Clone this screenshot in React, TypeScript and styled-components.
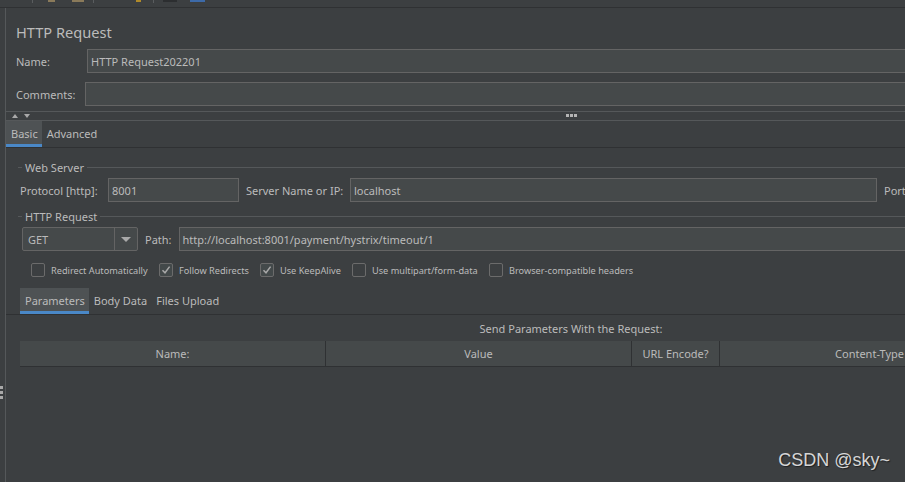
import styled, { createGlobalStyle } from "styled-components";

const GlobalStyle = createGlobalStyle`
  html, body {
    margin: 0;
    padding: 0;
    background: #3c3f41;
    overflow: hidden;
  }
  * {
    box-sizing: border-box;
  }
`;

const Frame = styled.div`
  width: 905px;
  height: 482px;
  display: flex;
  flex-direction: column;
  background: #3c3f41;
  color: #bbbbbb;
  font-family: "Noto Sans", "Open Sans", sans-serif;
  font-size: 11px;
  position: relative;
  overflow: hidden;
`;

const Toolbar = styled.div`
  height: 8px;
  flex: none;
  display: flex;
  align-items: flex-start;
  border-bottom: 1px solid #2f3133;
  padding-left: 32px;
`;

const ToolSep = styled.div<{ $gap: number }>`
  width: 1px;
  height: 3px;
  background: #5a5d5f;
  margin-right: ${({ $gap }) => $gap}px;
`;

const ToolIcon = styled.div<{ $color: string; $w: number; $gap: number }>`
  width: ${({ $w }) => $w}px;
  height: 2px;
  background: ${({ $color }) => $color};
  margin-right: ${({ $gap }) => $gap}px;
`;

const Body = styled.div`
  flex: 1;
  display: flex;
  min-height: 0;
`;

const Gutter = styled.div`
  width: 6px;
  flex: none;
  border-right: 1px solid #55585a;
  display: flex;
  flex-direction: column;
  padding-top: 378px;
  gap: 2px;
`;

const GripDot = styled.div`
  width: 3px;
  height: 3px;
  background: #a9a9a9;
`;

/* the panel is wider than the window, so its right part is cut off */
const Main = styled.div`
  width: 1130px;
  flex: none;
  display: flex;
  flex-direction: column;
`;

const Header = styled.div`
  padding: 13px 0 0 10px;
  display: flex;
  flex-direction: column;
`;

const Title = styled.div`
  font-size: 14.6px;
  height: 22px;
  line-height: 22px;
  margin-bottom: 6px;
`;

const FieldRow = styled.div<{ $mb?: number }>`
  display: flex;
  align-items: center;
  height: 24px;
  margin-bottom: ${({ $mb }) => $mb ?? 0}px;
`;

const Label = styled.span<{ $w?: number }>`
  width: ${({ $w }) => ($w ? `${$w}px` : "auto")};
  flex: none;
  white-space: nowrap;
`;

const TextField = styled.div<{ $w?: number }>`
  height: 24px;
  ${({ $w }) => ($w ? `width: ${$w}px; flex: none;` : "flex: 1;")}
  background: #45494a;
  border: 1px solid #646464;
  display: flex;
  align-items: center;
  padding-left: 3px;
  white-space: nowrap;
  overflow: hidden;
`;

const Splitter = styled.div`
  height: 10px;
  flex: none;
  margin-top: 5px;
  border-top: 1px solid #55585a;
  border-bottom: 1px solid #55585a;
  display: flex;
  align-items: center;
  position: relative;
  padding-left: 6px;
  gap: 6px;
`;

const Arrow = styled.div<{ $up?: boolean }>`
  width: 0;
  height: 0;
  border-left: 3px solid transparent;
  border-right: 3px solid transparent;
  ${({ $up }) =>
    $up ? "border-bottom: 4px solid #a9a9a9;" : "border-top: 4px solid #a9a9a9;"}
`;

const SplitDots = styled.div`
  position: absolute;
  left: 560px;
  top: 2px;
  display: flex;
  gap: 1px;
`;

const SplitDot = styled.div`
  width: 3px;
  height: 3px;
  background: #b5b5b5;
`;

const TabBar = styled.div<{ $pl?: number }>`
  display: flex;
  height: 27px;
  flex: none;
  border-bottom: 1px solid #2f3133;
  padding-left: ${({ $pl }) => $pl ?? 0}px;
`;

const Tab = styled.div<{ $active?: boolean }>`
  padding: 2px 4px 0 5px;
  display: flex;
  align-items: center;
  height: 100%;
  background: ${({ $active }) => ($active ? "#4e5254" : "transparent")};
  border-bottom: 3px solid ${({ $active }) => ($active ? "#4a88c7" : "transparent")};
`;

const Content = styled.div`
  padding: 11px 0 0 12px;
  display: flex;
  flex-direction: column;
`;

const Group = styled.div`
  display: flex;
  align-items: center;
  height: 16px;
  gap: 3px;
  &::before {
    content: "";
    width: 4px;
    height: 1px;
    background: #55585a;
  }
  &::after {
    content: "";
    flex: 1;
    height: 1px;
    background: #55585a;
  }
`;

const RowLine = styled.div<{ $mt: number; $mb: number; $pl: number }>`
  display: flex;
  align-items: center;
  height: 24px;
  margin: ${({ $mt, $mb }) => `${$mt}px 0 ${$mb}px 0`};
  padding-left: ${({ $pl }) => $pl}px;
  gap: 7px;
`;

const Combo = styled.div`
  width: 116px;
  height: 24px;
  flex: none;
  display: flex;
  background: #45494a;
  border: 1px solid #646464;
  border-radius: 2px;
`;

const ComboValue = styled.div`
  flex: 1;
  display: flex;
  align-items: center;
  padding-left: 5px;
  border-right: 1px solid #646464;
`;

const ComboButton = styled.div`
  width: 22px;
  display: flex;
  align-items: center;
  justify-content: center;
  &::after {
    content: "";
    border-left: 5px solid transparent;
    border-right: 5px solid transparent;
    border-top: 5px solid #a9a9a9;
  }
`;

const CheckRow = styled.div`
  display: flex;
  align-items: center;
  height: 16px;
  padding-left: 13px;
  font-size: 9.2px;
  margin-bottom: 10px;
`;

const CheckItem = styled.div<{ $w: number }>`
  display: flex;
  align-items: center;
  width: ${({ $w }) => $w}px;
  flex: none;
  gap: 6px;
  white-space: nowrap;
`;

const Box = styled.div<{ $checked?: boolean }>`
  width: 14px;
  height: 14px;
  flex: none;
  border: 1px solid #6b6b6b;
  border-radius: 2px;
  background: ${({ $checked }) => ($checked ? "#43494a" : "#3c3f41")};
  display: flex;
  align-items: center;
  justify-content: center;
`;

const SendTitle = styled.div`
  text-align: center;
  height: 26px;
  line-height: 27px;
`;

const TableHead = styled.div`
  display: grid;
  grid-template-columns: 306px 306px 88px 300px;
  height: 26px;
  background: #45494a;
  border-bottom: 1px solid #2f3133;
  margin-left: 14px;
`;

const HeadCell = styled.div`
  display: flex;
  align-items: center;
  justify-content: center;
  border-right: 1px solid #2f3133;
  white-space: nowrap;
  overflow: hidden;
`;

const Watermark = styled.div`
  position: absolute;
  right: 15px;
  bottom: 11px;
  font-family: "Liberation Sans", Arial, sans-serif;
  font-size: 18px;
  color: #d6d6d6;
  text-shadow: 1px 1px 1px rgba(0, 0, 0, 0.5);
`;

const Check = () => (
  <svg width="10" height="10" viewBox="0 0 10 10">
    <path d="M1.5 5.2 L4 7.8 L8.6 1.6" fill="none" stroke="#a8a8a8" strokeWidth="1.5" />
  </svg>
);

const checks = [
  { label: "Redirect Automatically", checked: false, w: 128 },
  { label: "Follow Redirects", checked: true, w: 101 },
  { label: "Use KeepAlive", checked: true, w: 92 },
  { label: "Use multipart/form-data", checked: false, w: 137 },
  { label: "Browser-compatible headers", checked: false, w: 160 },
];

export default function App() {
  return (
    <Frame>
      <GlobalStyle />
      <Toolbar>
        <ToolSep $gap={15} />
        <ToolIcon $color="#8a7a5a" $w={7} $gap={17} />
        <ToolIcon $color="#8a7a5a" $w={12} $gap={9} />
        <ToolSep $gap={42} />
        <ToolIcon $color="#b08a2a" $w={5} $gap={12} />
        <ToolSep $gap={9} />
        <ToolIcon $color="#2c2e30" $w={14} $gap={13} />
        <ToolIcon $color="#3d6aa8" $w={15} $gap={0} />
      </Toolbar>
      <Body>
        <Gutter>
          <GripDot />
          <GripDot />
          <GripDot />
        </Gutter>
        <Main>
          <Header>
            <Title>HTTP Request</Title>
            <FieldRow $mb={9}>
              <Label $w={71}>Name:</Label>
              <TextField>HTTP Request202201</TextField>
            </FieldRow>
            <FieldRow>
              <Label $w={69}>Comments:</Label>
              <TextField />
            </FieldRow>
          </Header>
          <Splitter>
            <Arrow $up />
            <Arrow />
            <SplitDots>
              <SplitDot />
              <SplitDot />
              <SplitDot />
            </SplitDots>
          </Splitter>
          <TabBar>
            <Tab $active>Basic</Tab>
            <Tab>Advanced</Tab>
          </TabBar>
          <Content>
            <Group>Web Server</Group>
            <RowLine $mt={3} $mb={6} $pl={2}>
              <Label $w={81}>Protocol [http]:</Label>
              <TextField $w={131}>8001</TextField>
              <Label $w={97}>Server Name or IP:</Label>
              <TextField $w={527}>localhost</TextField>
              <Label>Port</Label>
            </RowLine>
            <Group>HTTP Request</Group>
            <RowLine $mt={3} $mb={11} $pl={4}>
              <Combo>
                <ComboValue>GET</ComboValue>
                <ComboButton />
              </Combo>
              <Label>Path:</Label>
              <TextField>http://localhost:8001/payment/hystrix/timeout/1</TextField>
            </RowLine>
            <CheckRow>
              {checks.map((c) => (
                <CheckItem key={c.label} $w={c.w}>
                  <Box $checked={c.checked}>{c.checked && <Check />}</Box>
                  {c.label}
                </CheckItem>
              ))}
            </CheckRow>
          </Content>
          <TabBar $pl={14}>
            <Tab $active>Parameters</Tab>
            <Tab>Body Data</Tab>
            <Tab>Files Upload</Tab>
          </TabBar>
          <SendTitle>Send Parameters With the Request:</SendTitle>
          <TableHead>
            <HeadCell>Name:</HeadCell>
            <HeadCell>Value</HeadCell>
            <HeadCell>URL Encode?</HeadCell>
            <HeadCell>Content-Type</HeadCell>
          </TableHead>
        </Main>
      </Body>
      <Watermark>CSDN @sky~</Watermark>
    </Frame>
  );
}
